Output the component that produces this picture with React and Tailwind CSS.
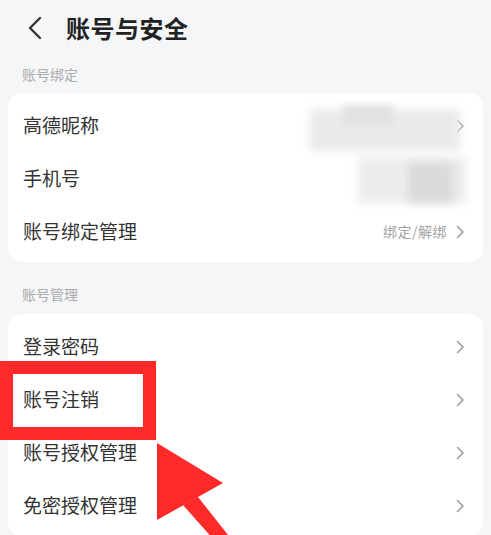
import React from 'react';

const Chevron = ({ className = '' }) => (
  <svg width="10" height="16" viewBox="0 0 10 16" className={className} fill="none">
    <path d="M2.5 2.5 L8 8 L2.5 13.5" stroke="#9a9a9a" strokeWidth="1.5" strokeLinecap="round" strokeLinejoin="round" />
  </svg>
);

const Row = ({ label, extra, hideChevron }) => (
  <div className="h-[53px] flex items-center justify-between pl-[15px] pr-[18px]">
    <span className="text-[19px] text-[#333]">{label}</span>
    <div className="flex items-center gap-[8px]">
      {extra && <span className="text-[14px] text-[#a3a3a3] tracking-[0.5px]">{extra}</span>}
      {!hideChevron && <Chevron />}
    </div>
  </div>
);

export default function App() {
  return (
    <div
      className="relative w-[491px] h-[535px] overflow-hidden bg-[#f5f6f8]"
      style={{ fontFamily: '"Noto Sans CJK SC", "Noto Sans", sans-serif' }}
    >
      {/* header */}
      <div className="h-[55px] flex items-center pl-[27px]">
        <svg width="16" height="24" viewBox="0 0 16 24" fill="none">
          <path d="M13 2 L3 12 L13 22" stroke="#333" strokeWidth="2.4" strokeLinecap="round" strokeLinejoin="round" />
        </svg>
        <span className="ml-[23px] text-[24px] font-semibold text-[#222] tracking-[0.5px]">账号与安全</span>
      </div>

      <div className="h-[38px] flex items-center px-[22px] text-[14px] text-[#ababab]">账号绑定</div>

      <div className="relative mx-[8px] bg-white rounded-[14px] pt-[6px] pb-[4px]">
        <Row label="高德昵称" />
        <Row label="手机号" hideChevron />
        <Row label="账号绑定管理" extra="绑定/解绑" />
        {/* blurred personal info */}
        <div className="absolute left-[302px] top-[16px] w-[150px] h-[42px] bg-[#e8e8e8] blur-[4px] opacity-90" />
        <div className="absolute left-[335px] top-[12px] w-[50px] h-[20px] bg-[#e2e2e2] blur-[3px]" />
        <div className="absolute left-[350px] top-[64px] w-[108px] h-[46px] bg-[#ececec] blur-[4px]" />
        <div className="absolute left-[400px] top-[70px] w-[45px] h-[40px] bg-[#d6d6d6] blur-[4px] opacity-80" />
      </div>

      <div className="pt-[24px] pb-[12px] px-[22px] text-[14px] leading-[16px] text-[#ababab]">账号管理</div>

      <div className="mx-[8px] bg-white rounded-[14px] pt-[6px] pb-[4px]">
        <Row label="登录密码" />
        <Row label="账号注销" />
        <Row label="账号授权管理" />
        <Row label="免密授权管理" />
      </div>

      {/* annotation overlay */}
      <div className="absolute left-0 top-[361px] w-[156px] h-[79px] border-[13px] border-[#fe2a2a]" />
      <svg className="absolute left-0 top-0" width="491" height="535" viewBox="0 0 491 535">
        <polygon points="157,443 223,483 157,520" fill="#fe2a2a" />
        <polygon points="183,505 198,497 232,540 214,540" fill="#fe2a2a" />
      </svg>
    </div>
  );
}
